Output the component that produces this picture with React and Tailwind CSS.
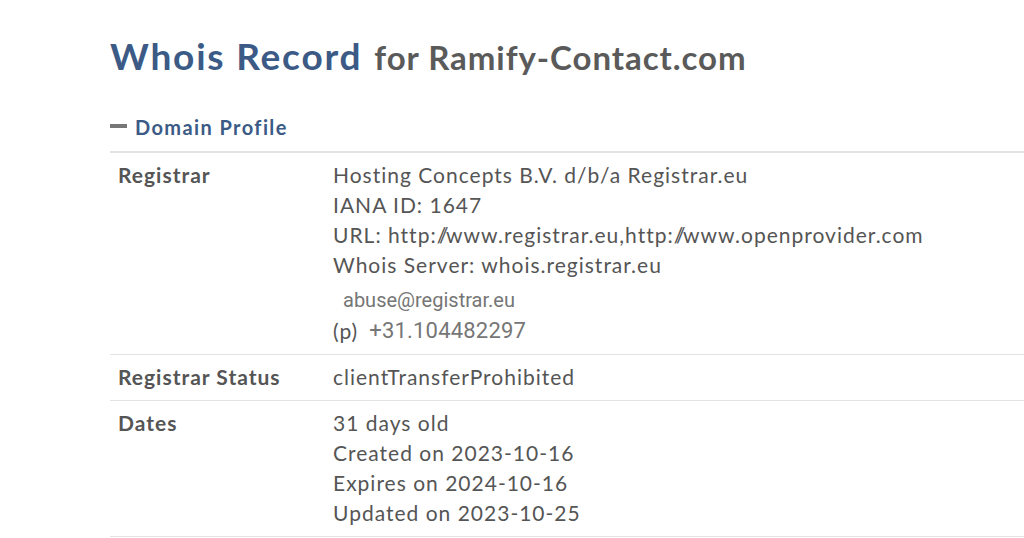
export default function App() {
  return (
    <div className="min-h-screen bg-white font-['Lato','Liberation_Sans',sans-serif] pl-[110px] pt-[37px]">
      <h1 className="flex items-baseline gap-[12px] leading-none">
        <span className="text-[37px] font-bold tracking-[1.8px] text-[#3b5a86]">Whois Record</span>
        <span className="text-[33px] font-bold tracking-[0.95px] text-[#5a5a5a]">for Ramify-Contact.com</span>
      </h1>

      <div className="mt-[41px] flex items-center gap-[8px] pb-[12px] leading-[24px]">
        <span className="block h-[4px] w-[17px] -translate-y-[1px] bg-[#777777]" />
        <span className="text-[20px] font-bold tracking-[1.4px] text-[#3b5a86]">Domain Profile</span>
      </div>

      <div className="border-t-2 border-[#e3e3e3] text-[21px] text-[#555555] tracking-[1px]">
        <div className="flex border-b border-[#e3e3e3] pt-[7px] pb-[8px] leading-[30px]">
          <div className="w-[223px] shrink-0 pl-[8px] font-bold">Registrar</div>
          <div>
            <div>Hosting Concepts B.V. d/b/a Registrar.eu</div>
            <div>IANA ID: 1647</div>
            <div>
              URL: http:<span className="tracking-[-2.5px]">//</span>www.registrar.eu,http:
              <span className="tracking-[-2.5px]">//</span>www.openprovider.com
            </div>
            <div>Whois Server: whois.registrar.eu</div>
            <div className="mt-[5px] pl-[10px] font-['Roboto',sans-serif] text-[20px] tracking-normal text-[#767676]">
              abuse@registrar.eu
            </div>
            <div className="flex items-center leading-[31px]">
              <span>(p)</span>
              <span className="ml-[11px] font-['Roboto',sans-serif] text-[22px] tracking-[0.2px] text-[#767676]">
                +31.104482297
              </span>
            </div>
          </div>
        </div>

        <div className="flex border-b border-[#e3e3e3] pt-[7px] pb-[8px] leading-[30px]">
          <div className="w-[223px] shrink-0 pl-[8px] font-bold">Registrar Status</div>
          <div>clientTransferProhibited</div>
        </div>

        <div className="flex border-b border-[#e3e3e3] pt-[7px] pb-[8px] leading-[30px]">
          <div className="w-[223px] shrink-0 pl-[8px] font-bold">Dates</div>
          <div>
            <div>31 days old</div>
            <div>Created on 2023-10-16</div>
            <div>Expires on 2024-10-16</div>
            <div>Updated on 2023-10-25</div>
          </div>
        </div>
      </div>
    </div>
  );
}
